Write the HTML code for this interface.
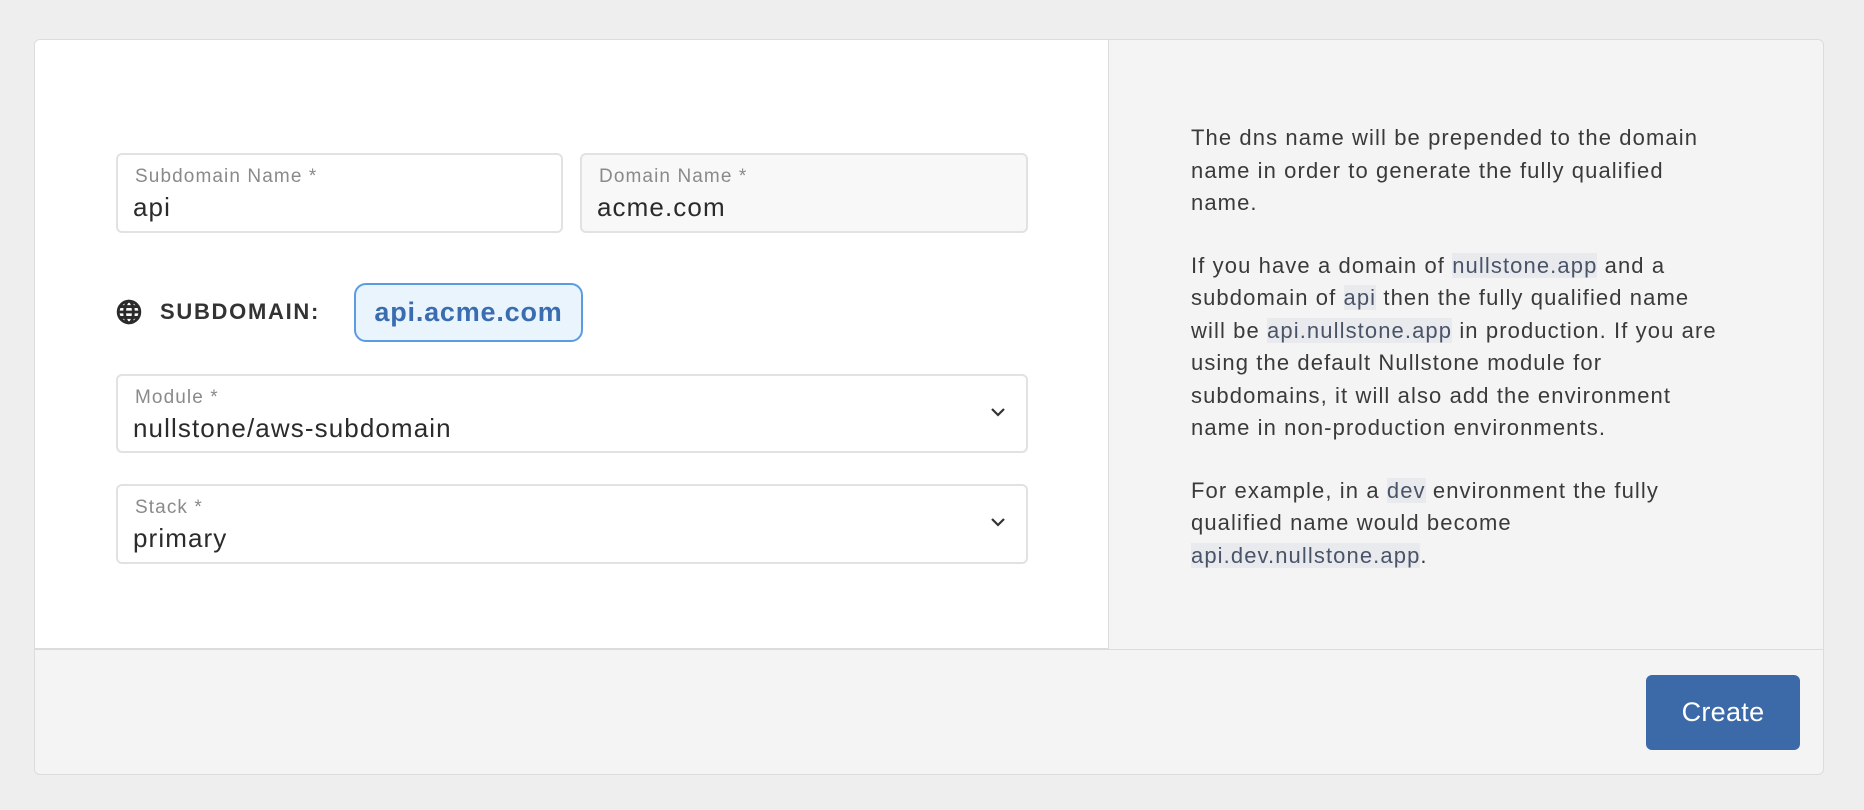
<!DOCTYPE html>
<html><head><style>
*{box-sizing:border-box;margin:0;padding:0}
body{width:1864px;height:810px;background:#eeeeee;font-family:"Liberation Sans",sans-serif;position:relative;overflow:hidden}
.card{position:absolute;left:34px;top:39px;width:1790px;height:736px;background:#f4f4f4;border:1px solid #dcdcdc;border-radius:6px;overflow:hidden}
.left{position:absolute;left:0;top:0;width:1074px;height:609px;background:#fff;border-right:1px solid #dcdcdc;border-bottom:1px solid #dcdcdc}
.foot{position:absolute;left:0;top:609px;width:100%;border-top:1px solid #dcdcdc}
.inp{position:absolute;border:2px solid #e2e2e2;border-radius:6px;background:#fff}
.inp .l{position:absolute;left:17px;top:11px;font-size:19px;color:#8a8a8a;letter-spacing:1.1px}
.inp .v{position:absolute;left:15px;top:37px;font-size:26px;color:#2b2b2b;letter-spacing:1.1px}
.chev{position:absolute;right:20px;top:30px}
.right{position:absolute;left:1156px;top:82px;font-size:22px;line-height:32.5px;color:#3a3a3a;white-space:nowrap;letter-spacing:1.1px}
.c{background:#e9eaee;color:#4a5468}
.btn{position:absolute;left:1611px;top:635px;width:154px;height:75px;background:#3c6aa8;border-radius:6px;color:#fff;font-size:27px;text-align:center;line-height:75px;letter-spacing:0.3px}
</style></head><body>
<div class="card">
<div class="left">
 <div class="inp" style="left:81px;top:113px;width:447px;height:80px"><div class="l">Subdomain Name *</div><div class="v">api</div></div>
 <div class="inp" style="left:545px;top:113px;width:448px;height:80px;background:#f8f8f8"><div class="l">Domain Name *</div><div class="v">acme.com</div></div>
 <svg style="position:absolute;left:81px;top:259px" width="26" height="26" viewBox="0 0 24 24" fill="none" stroke="#2b2b2b" stroke-width="2.6"><circle cx="12" cy="12" r="10"/><ellipse cx="12" cy="12" rx="4" ry="10"/><path d="M2 12h20M4 7h16M4 17h16"/></svg>
 <div style="position:absolute;left:125px;top:259px;font-size:22px;font-weight:bold;color:#333;letter-spacing:1.7px">SUBDOMAIN:</div>
 <div style="position:absolute;left:319px;top:243px;width:229px;height:59px;background:#eaf4fd;border:2px solid #5b9be0;border-radius:12px;color:#3a6db0;font-size:27px;font-weight:bold;line-height:55px;text-align:center;letter-spacing:0.8px">api.acme.com</div>
 <div class="inp" style="left:81px;top:334px;width:912px;height:79px"><div class="l">Module *</div><div class="v">nullstone/aws-subdomain</div>
  <svg class="chev" width="16" height="12" viewBox="0 0 16 12"><path d="M2 3l6 6 6-6" stroke="#333" stroke-width="2.2" fill="none"/></svg></div>
 <div class="inp" style="left:81px;top:444px;width:912px;height:80px"><div class="l">Stack *</div><div class="v">primary</div>
  <svg class="chev" width="16" height="12" viewBox="0 0 16 12"><path d="M2 3l6 6 6-6" stroke="#333" stroke-width="2.2" fill="none"/></svg></div>
</div>
<div class="foot"></div>
<div class="right">
The dns name will be prepended to the domain<br>name in order to generate the fully qualified<br>name.<br><div style="height:30px"></div>
If you have a domain of <span class="c">nullstone.app</span> and a<br>subdomain of <span class="c">api</span> then the fully qualified name<br>will be <span class="c">api.nullstone.app</span> in production. If you are<br>using the default Nullstone module for<br>subdomains, it will also add the environment<br>name in non-production environments.<br><div style="height:30px"></div>
For example, in a <span class="c">dev</span> environment the fully<br>qualified name would become<br><span class="c">api.dev.nullstone.app</span>.
</div>
<div class="btn">Create</div>
</div>
</body></html>
